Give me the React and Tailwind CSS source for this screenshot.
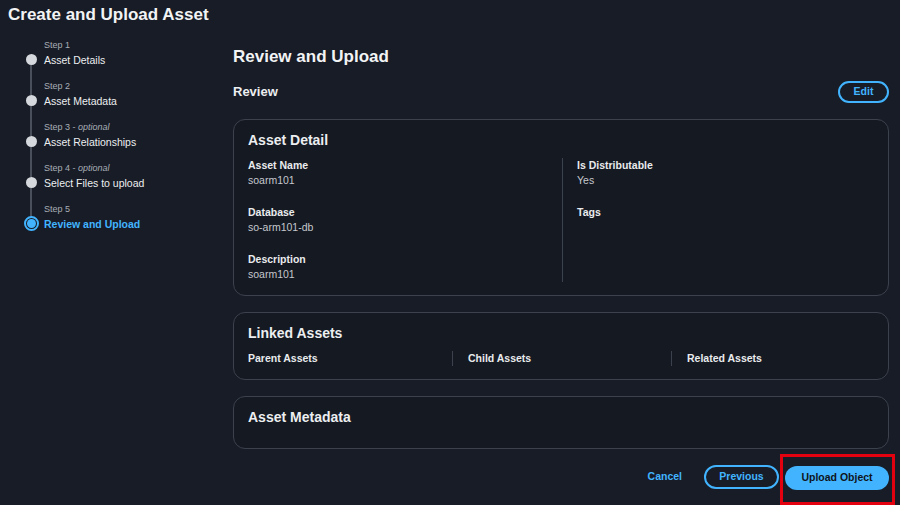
const steps = [
  { label: 'Step 1', title: 'Asset Details' },
  { label: 'Step 2', title: 'Asset Metadata' },
  { label: 'Step 3', optional: true, title: 'Asset Relationships' },
  { label: 'Step 4', optional: true, title: 'Select Files to upload' },
  { label: 'Step 5', title: 'Review and Upload', active: true },
];

function Stepper() {
  return (
    <div className="pt-[8px] pl-[23px]">
      {steps.map((s, i) => (
        <div key={s.title} className="flex h-[41px]">
          {/* dot + connector */}
          <div className="w-[16px] flex flex-col items-center">
            <div className={`w-[2px] h-[16px] ${i === 0 ? 'bg-transparent' : 'bg-[#4a505b]'}`} />
            {s.active ? (
              <div className="w-[15px] h-[15px] -mt-[2px] rounded-full border-2 border-[#42b4ff] flex items-center justify-center">
                <div className="w-[9px] h-[9px] rounded-full bg-[#42b4ff]" />
              </div>
            ) : (
              <div className="w-[11px] h-[11px] rounded-full bg-[#d5d8dc]" />
            )}
            <div className={`w-[2px] flex-1 ${i === steps.length - 1 ? 'bg-transparent' : 'bg-[#4a505b]'}`} />
          </div>
          <div className="pl-[5px]">
            <div className="h-[14px] leading-[14px] text-[9px] text-[#a9aeb6]">
              {s.label}
              {s.optional && <span> - <i>optional</i></span>}
            </div>
            <div
              className={`h-[16px] leading-[16px] text-[10.5px] ${
                s.active ? 'font-bold text-[#42b4ff]' : 'font-medium text-[#eceef0]'
              }`}
            >
              {s.title}
            </div>
          </div>
        </div>
      ))}
    </div>
  );
}

function Field({ label, value }) {
  return (
    <div className="h-[47px]">
      <div className="leading-[15px] text-[10.5px] font-bold text-[#e9ebed]">{label}</div>
      {value && <div className="leading-[15px] text-[10.5px] text-[#c6c8cd]">{value}</div>}
    </div>
  );
}

function Card({ title, children, className = '' }) {
  return (
    <div className={`rounded-[12px] border border-[#3c424d] bg-[#141922] px-[14px] pt-[10px] ${className}`}>
      <h3 className="leading-[20px] text-[14px] font-bold text-[#eceef0]">{title}</h3>
      {children}
    </div>
  );
}

export default function App() {
  return (
    <div
      className="w-[900px] h-[505px] overflow-hidden bg-[#171c26] text-[#e9ebed]"
      style={{ fontFamily: '"Liberation Sans", Arial, sans-serif' }}
    >
      <h1 className="h-[30px] leading-[30px] pl-[8px] text-[17px] font-bold text-[#f2f3f4]">
        Create and Upload Asset
      </h1>

      <div className="flex">
        <aside className="w-[233px] shrink-0">
          <Stepper />
        </aside>

        <main className="w-[656px] flex flex-col">
          <h2 className="mt-[15px] leading-[24px] text-[17px] font-bold text-[#f2f3f4]">Review and Upload</h2>

          <div className="mt-[12px] h-[22px] flex items-center justify-between">
            <span className="text-[13px] font-bold text-[#eceef0]">Review</span>
            <button className="w-[51px] h-[22px] rounded-full border-2 border-[#42b4ff] text-[10.5px] font-bold text-[#42b4ff]">
              Edit
            </button>
          </div>

          <Card title="Asset Detail" className="mt-[16px] h-[177px]">
            <div className="mt-[8px] grid grid-cols-[314px_1fr]">
              <div>
                <Field label="Asset Name" value="soarm101" />
                <Field label="Database" value="so-arm101-db" />
                <div className="h-[30px]">
                  <div className="leading-[15px] text-[10.5px] font-bold text-[#e9ebed]">Description</div>
                  <div className="leading-[15px] text-[10.5px] text-[#c6c8cd]">soarm101</div>
                </div>
              </div>
              <div className="border-l border-[#3c424d] pl-[14px] h-[124px]">
                <Field label="Is Distributable" value="Yes" />
                <Field label="Tags" />
              </div>
            </div>
          </Card>

          <Card title="Linked Assets" className="mt-[16px] h-[68px]">
            <div className="mt-[8px] grid grid-cols-[204px_219px_1fr] text-[10.5px] font-bold text-[#e9ebed] leading-[15px]">
              <div>Parent Assets</div>
              <div className="border-l border-[#3c424d] pl-[15px]">Child Assets</div>
              <div className="border-l border-[#3c424d] pl-[15px]">Related Assets</div>
            </div>
          </Card>

          <Card title="Asset Metadata" className="mt-[16px] h-[53px]" />

          <div className="mt-[16px] h-[24px] flex items-center justify-end">
            <button className="mr-[22px] text-[10.5px] font-bold text-[#42b4ff]">Cancel</button>
            <button className="w-[75px] h-[24px] rounded-full border-2 border-[#42b4ff] text-[10.5px] font-bold text-[#42b4ff]">
              Previous
            </button>
            <div className="relative ml-[6px]">
              <button className="w-[104px] h-[24px] rounded-full bg-[#42b4ff] text-[10.5px] font-bold text-[#0f141a]">
                Upload Object
              </button>
              <div className="absolute -left-[5px] -right-[6px] -top-[10px] -bottom-[15px] border-[3px] border-[#e3000f] pointer-events-none" />
            </div>
          </div>
        </main>
      </div>
    </div>
  );
}
